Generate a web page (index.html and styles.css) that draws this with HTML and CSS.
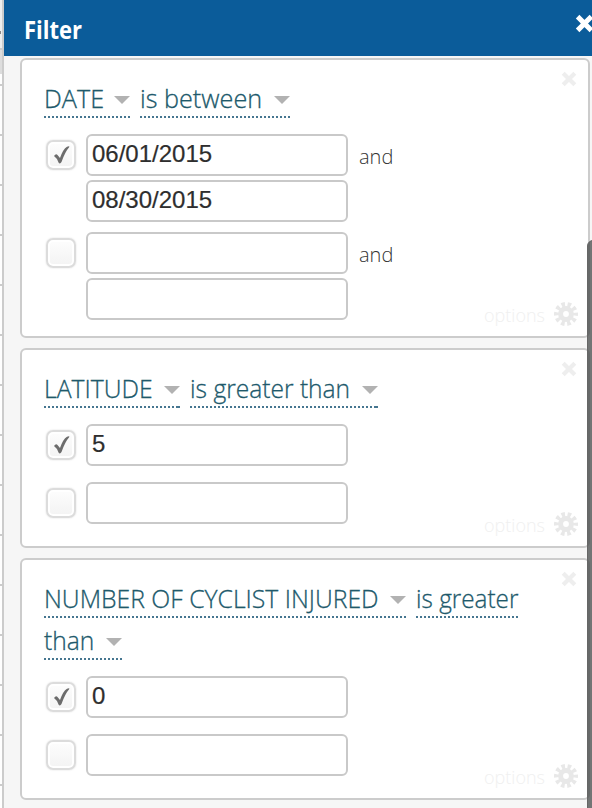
FILE: index.html
```html
<!DOCTYPE html>
<html lang="en">
<head>
<meta charset="utf-8">
<title>Filter</title>
<link rel="stylesheet" href="styles.css">
</head>
<body>
<svg width="0" height="0" class="defs">
  <symbol id="close" viewBox="0 0 16 16"><path d="M2.200 2.200 13.800 13.800M13.800 2.200 2.200 13.800" fill="none" stroke="currentColor" stroke-width="4.2"/></symbol>
  <symbol id="check" viewBox="0 0 16 18"><path d="M0 10 Q2 7 3.5 9 L6 12 Q9 3 13 .7 Q15.500 0 15.500 .8 Q11 6 7.500 16 Q6 18.500 4.500 16.500 Q3 12 0 10Z" fill="#6c6c6c"/></symbol>
  <symbol id="gear" viewBox="-12 -12 24 24"><g fill="none" stroke="currentColor"><circle r="9.500" stroke-width="5" stroke-dasharray="3.400 2.569" stroke-dashoffset="1.700"/><circle r="5.400" stroke-width="5"/></g></symbol>
</svg>
<div class="app">
  <div class="grid-edge"><i></i></div>
  <main class="pane">
    <header><h1>Filter</h1><svg class="close-pane"><use href="#close"/></svg></header>
    <section class="card tall">
      <svg class="close"><use href="#close"/></svg>
      <div class="title">
        <span class="term date"><b>DATE</b><i></i></span><span class="term between"><b>is between</b><i></i></span>
      </div>
      <div class="row"><span class="box"><svg><use href="#check"/></svg></span><div class="fields"><div class="field">06/01/2015</div><div class="field">08/30/2015</div></div><span class="and">and</span></div>
      <div class="row"><span class="box"></span><div class="fields"><div class="field"></div><div class="field"></div></div><span class="and">and</span></div>
      <div class="options"><span>options</span><svg><use href="#gear"/></svg></div>
    </section>
    <section class="card">
      <svg class="close"><use href="#close"/></svg>
      <div class="title">
        <span class="term latitude"><b>LATITUDE</b><i></i></span><span class="term greater-than"><b>is greater than</b><i></i></span>
      </div>
      <div class="row"><span class="box"><svg><use href="#check"/></svg></span><div class="fields"><div class="field">5</div></div></div>
      <div class="row"><span class="box"></span><div class="fields"><div class="field"></div></div></div>
      <div class="options"><span>options</span><svg><use href="#gear"/></svg></div>
    </section>
    <section class="card">
      <svg class="close"><use href="#close"/></svg>
      <div class="title">
        <span class="term injured"><b>NUMBER OF CYCLIST INJURED</b><i></i></span><span class="term greater"><b>is greater</b></span>
        <span class="term than"><b>than</b><i></i></span>
      </div>
      <div class="row"><span class="box"><svg><use href="#check"/></svg></span><div class="fields"><div class="field">0</div></div></div>
      <div class="row"><span class="box"></span><div class="fields"><div class="field"></div></div></div>
      <div class="options"><span>options</span><svg><use href="#gear"/></svg></div>
    </section>
    <div class="scrollbar"></div>
  </main>
</div>
</body>
</html>
```
FILE: styles.css
```css
* { box-sizing: border-box; }
body { margin: 0; background: #f6f6f6; font-family: "Open Sans", sans-serif; overflow: hidden; }
svg { display: block; }
.defs { position: absolute; }
.app { display: flex; width: 592px; height: 808px; overflow: hidden; }
.grid-edge {
  flex: none; width: 4px; border-right: 2px solid #ccc;
  background:
    linear-gradient(#eee 48px, #ccc 48px 50px, #ddd 50px 74px, #fff 74px 84px, transparent 84px),
    repeating-linear-gradient(#fff 0 34px, #ccc 34px 36px, #fff 36px 50px);
  background-position: 0 0, 0 0;
}
.grid-edge i { display: block; width: 1px; height: 3px; margin-top: 31px; background: #888; }
.pane { position: relative; width: 588px; height: 808px; }
header { display: flex; justify-content: space-between; height: 56px; padding: 0 0 0 20px; background: #0b5c9a; color: #fff; }
h1 { margin: 0; font-size: 25px; font-weight: 700; line-height: 59px; transform: scaleX(.88); transform-origin: 0 0; }
.close-pane { width: 19px; height: 19px; margin: 14px -2px 0 0; }
.card { position: relative; width: 570px; height: 200px; margin: 10px 0 0 16px; padding: 18px 0 0 22px; background: #fff; border: 2px solid #ccc; border-radius: 6px; }
.card.tall { height: 280px; margin-top: 2px; }
.card:nth-of-type(3) { height: 242px; }
.close { position: absolute; right: 11px; top: 11px; width: 16px; height: 16px; color: #eee; }
.title { display: flex; flex-wrap: wrap; gap: 2px 10px; width: 500px; }
.term {
  display: flex; justify-content: space-between; height: 40px; color: #20596b;
  background:
    linear-gradient(#467690, #467690) right bottom / 2px 2px no-repeat,
    repeating-linear-gradient(90deg, #467690 0 2px, transparent 2px 4px) left bottom / 100% 2px no-repeat;
}
.term b { width: 0; white-space: nowrap; font-size: 26px; font-weight: 300; line-height: 40px; transform: scaleX(.945); transform-origin: 0 0; -webkit-text-stroke: .3px; }
.term i { width: 16px; height: 8px; margin-top: 18px; background: #b2b2b2; clip-path: polygon(0 0, 100% 0, 50% 100%); }
.date { width: 86px; }
.date b, .between b { transform: scaleX(.97); }
.between { width: 150px; }
.latitude { width: 136px; }
.latitude b, .injured b { transform: scaleX(.952); }
.greater-than { width: 188px; }
.injured { width: 362px; }
.greater { width: 102px; }
.greater b { transform: scaleX(.935); }
.than { width: 78px; }
.row { display: flex; align-items: flex-start; margin-top: 16px; }
.row + .row { margin-top: 10px; }
.card:not(.tall) .row + .row { margin-top: 16px; }
.box { width: 30px; height: 30px; margin: 6px 10px 0 2px; padding: 6px 0 0 6px; border: 2px solid #dcdcdc; border-radius: 7px; background: linear-gradient(#fdfdfd, #f3f3f3); box-shadow: inset 0 0 0 2px #fff, 0 0 2px #ddd; }
.box svg { width: 16px; height: 18px; margin-top: -2px; }
.fields { display: flex; flex-direction: column; gap: 4px; }
.field { width: 262px; height: 42px; padding-left: 4px; border: 2px solid #c9c9c9; border-radius: 6px; font: 24px/36px "Liberation Sans", sans-serif; color: #2e2e2e; -webkit-text-stroke: .2px; }
.and { margin: 9px 0 0 11px; font-size: 20px; font-weight: 300; line-height: 28px; color: #333; }
.options { position: absolute; right: 10px; bottom: 9px; display: flex; gap: 9px; align-items: center; color: #f0f0f0; font-size: 18px; font-weight: 300; line-height: 26px; }
.options span { position: relative; top: 1px; }
.options svg { width: 24px; height: 24px; color: #e8e8e8; }
.scrollbar { position: absolute; left: 583px; top: 240px; width: 12px; height: 580px; border-radius: 6px; background: rgba(64, 66, 66, .72); border: 1px solid #666; }
```
